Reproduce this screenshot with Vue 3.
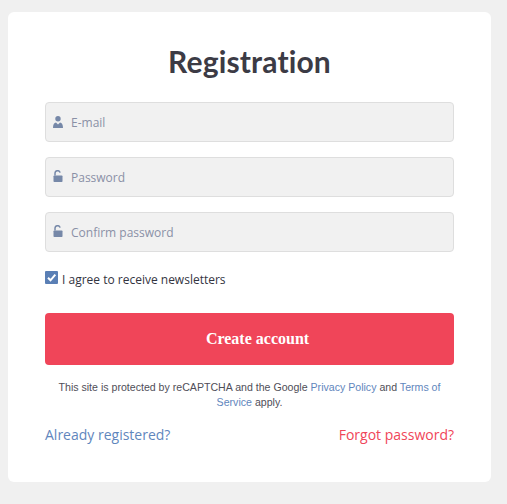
<script setup>
const fields = [
  { id: 'email', type: 'text', placeholder: 'E-mail', icon: 'user' },
  { id: 'password', type: 'password', placeholder: 'Password', icon: 'lock' },
  { id: 'confirm', type: 'password', placeholder: 'Confirm password', icon: 'lock' }
]
</script>

<template>
  <div class="page">
    <form class="card" @submit.prevent>
      <h1 class="title">Registration</h1>

      <div v-for="field in fields" :key="field.id" class="input-wrap">
        <svg v-if="field.icon === 'user'" class="field-icon" viewBox="0 0 10 12" aria-hidden="true">
          <circle cx="5" cy="2.8" r="2.7" />
          <path d="M0 12c0-3.4 1.1-5 3-5.4L5 8.5l2-1.9c1.9.4 3 2 3 5.4z" />
        </svg>
        <svg v-else class="field-icon lock" viewBox="0 0 10 12" aria-hidden="true">
          <path class="shackle" d="M2 5.5V3.2a2.6 2.6 0 0 1 5.1-.6" />
          <rect x="0.5" y="5.5" width="9" height="6.5" rx="0.8" />
        </svg>
        <input :id="field.id" :type="field.type" :placeholder="field.placeholder" class="field-input" />
      </div>

      <label class="agree">
        <span class="check">
          <svg viewBox="0 0 13 13" aria-hidden="true">
            <path d="M3 6.8l2.5 2.5 4.8-5.6" />
          </svg>
        </span>
        I agree to receive newsletters
      </label>

      <button type="submit" class="submit">Create account</button>

      <p class="recaptcha">
        This site is protected by reCAPTCHA and the Google
        <a href="#">Privacy Policy</a> and <a href="#">Terms of Service</a> apply.
      </p>

      <div class="links">
        <a href="#" class="login">Already registered?</a>
        <a href="#" class="forgot">Forgot password?</a>
      </div>
    </form>
  </div>
</template>

<style>
html,
body {
  margin: 0;
  background: #f0f0f0;
}
</style>

<style scoped>
.page {
  min-height: 504px;
  padding: 12px 16px 22px 8px;
  box-sizing: border-box;
}

.card {
  height: 470px;
  box-sizing: border-box;
  padding: 30px 37px 0;
  background: #fff;
  border-radius: 6px;
  display: flex;
  flex-direction: column;
}

.title {
  margin: 0 0 22px;
  height: 38px;
  line-height: 38px;
  text-align: center;
  font-family: Lato, sans-serif;
  font-size: 30px;
  font-weight: 700;
  letter-spacing: 0.15px;
  font-variant-ligatures: none;
  color: #3c3b45;
}

.input-wrap {
  position: relative;
  display: flex;
  align-items: center;
  margin-bottom: 15px;
}

.field-icon {
  position: absolute;
  left: 8px;
  top: 14px;
  width: 10px;
  height: 12px;
  fill: #7688a8;
}

.field-icon.lock {
  top: 13px;
}

.shackle {
  fill: none;
  stroke: #7688a8;
  stroke-width: 1.5;
}

.field-input {
  width: 100%;
  height: 40px;
  box-sizing: border-box;
  padding: 0 10px 0 25px;
  border: 1px solid #dedede;
  border-radius: 4px;
  background: #f1f1f1;
  font-family: "Open Sans", sans-serif;
  font-size: 12px;
  outline: none;
}

.field-input::placeholder {
  color: #8a90a6;
  opacity: 1;
}

.agree {
  display: flex;
  align-items: center;
  gap: 4px;
  height: 16px;
  margin-top: 4px;
  font-family: "Open Sans", sans-serif;
  font-size: 12px;
  color: #33343f;
}

.check {
  width: 13px;
  height: 13px;
  margin-top: -4px;
  border-radius: 1px;
  background: #5a7fb5;
  display: flex;
}

.check path {
  fill: none;
  stroke: #fff;
  stroke-width: 2;
}

.submit {
  height: 52px;
  margin-top: 26px;
  padding: 0 0 0 16px;
  border: 0;
  border-radius: 4px;
  background: #f04559;
  color: #fff;
  font-family: "Liberation Serif", serif;
  font-size: 16px;
  font-weight: 700;
}

.recaptcha {
  margin: 15px 0 0;
  padding: 0 10px;
  text-align: center;
  font-family: "Liberation Sans", sans-serif;
  font-size: 10.6px;
  line-height: 15px;
  color: #4f4e58;
}

.recaptcha a,
.login {
  color: #5f86bd;
  text-decoration: none;
}

.links {
  display: flex;
  justify-content: space-between;
  margin-top: 15px;
  font-family: "Open Sans", sans-serif;
  font-size: 14px;
  line-height: 20px;
}

.forgot {
  color: #f04559;
  text-decoration: none;
}
</style>
